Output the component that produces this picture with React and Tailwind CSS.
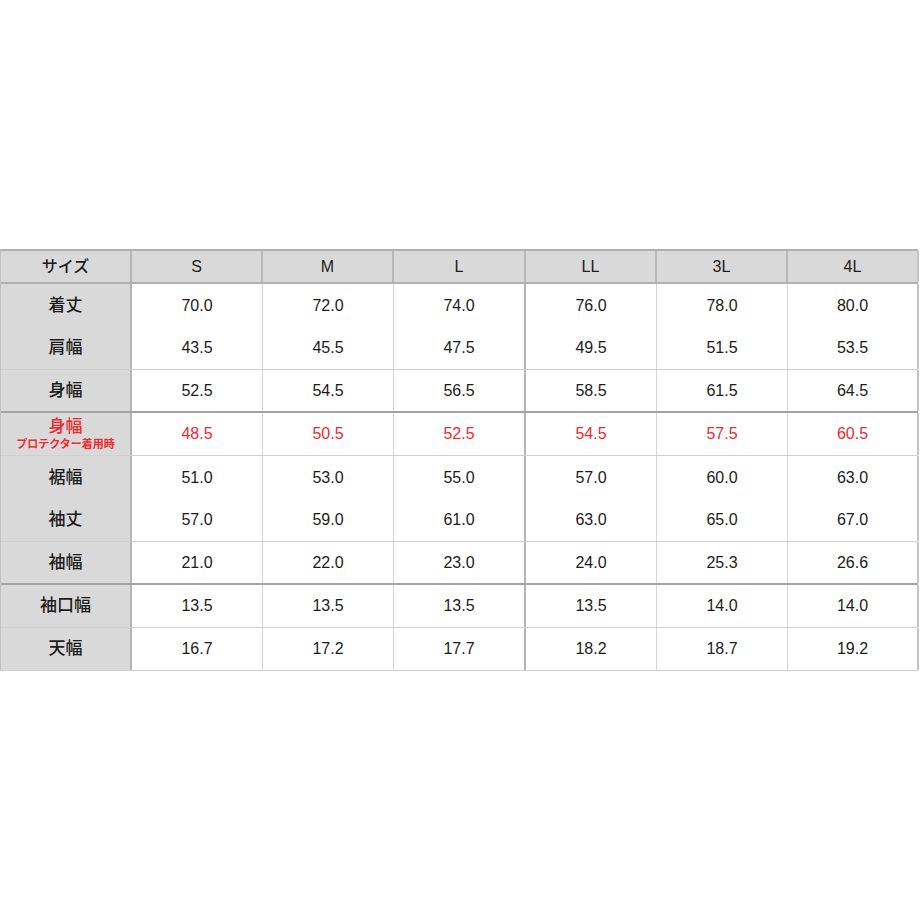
import React from "react";

const sizes = ["S", "M", "L", "LL", "3L", "4L"];

const rows = [
  { label: "着丈", v: ["70.0", "72.0", "74.0", "76.0", "78.0", "80.0"], b: "none" },
  { label: "肩幅", v: ["43.5", "45.5", "47.5", "49.5", "51.5", "53.5"], b: "light" },
  { label: "身幅", v: ["52.5", "54.5", "56.5", "58.5", "61.5", "64.5"], b: "dark" },
  { label: "身幅", sub: "プロテクター着用時", red: true, v: ["48.5", "50.5", "52.5", "54.5", "57.5", "60.5"], b: "light" },
  { label: "裾幅", v: ["51.0", "53.0", "55.0", "57.0", "60.0", "63.0"], b: "none" },
  { label: "袖丈", v: ["57.0", "59.0", "61.0", "63.0", "65.0", "67.0"], b: "light" },
  { label: "袖幅", v: ["21.0", "22.0", "23.0", "24.0", "25.3", "26.6"], b: "dark" },
  { label: "袖口幅", v: ["13.5", "13.5", "13.5", "13.5", "14.0", "14.0"], b: "light" },
  { label: "天幅", v: ["16.7", "17.2", "17.7", "18.2", "18.7", "19.2"], b: "light" },
];

const font = "font-['Liberation_Sans','Noto_Sans_CJK_JP',sans-serif]";

function borderB(b) {
  if (b === "dark") return "border-b-2 border-b-[#a3a3a3]";
  if (b === "light") return "border-b border-b-[#d0d0d0]";
  return "";
}

function colBorder(i) {
  if (i === 0) return "border-r-2 border-r-[#b4b4b4]";
  if (i === 3) return "border-r-2 border-r-[#b4b4b4]";
  if (i === 6) return "border-r-2 border-r-[#c4c4c4]";
  return "border-r border-r-[#d4d4d4]";
}

export default function App() {
  return (
    <div className={`w-[920px] h-[920px] bg-white pt-[249px] ${font} text-[#1c1c1c]`}>
      <div className="w-[918px] border-l border-l-[#c0c0c0] border-t-2 border-t-[#b0b0b0]">
        <div className="grid grid-cols-[131px_131px_131px_132px_131px_131px_131px] h-[33px] bg-[#d9d9d9] border-b-2 border-b-[#b0b0b0]">
          <div className={`flex items-center justify-center text-[16px] font-medium ${colBorder(0)}`}>サイズ</div>
          {sizes.map((s, i) => (
            <div key={s} className={`flex items-center justify-center text-[16px] ${i === 5 ? "border-r-2 border-r-[#c4c4c4]" : "border-r-2 border-r-[#b8b8b8]"}`}>
              {s}
            </div>
          ))}
        </div>
        {rows.map((r, ri) => (
          <div key={ri} className={`grid grid-cols-[131px_131px_131px_132px_131px_131px_131px] h-[43px] ${borderB(r.b)}`}>
            <div className={`bg-[#d9d9d9] flex flex-col items-center justify-center ${colBorder(0)}`}>
              {r.sub ? (
                <>
                  <span className="text-[17px] font-medium leading-[20px] text-[#ee2a2f]">{r.label}</span>
                  <span className="text-[11px] font-bold leading-[13px] text-[#ee2a2f] mt-[1px]">{r.sub}</span>
                </>
              ) : (
                <span className="text-[17px] font-medium">{r.label}</span>
              )}
            </div>
            {r.v.map((v, i) => (
              <div
                key={i}
                className={`flex items-center justify-center text-[16px] ${colBorder(i + 1)} ${r.red ? "text-[#ee2a2f]" : ""}`}
              >
                {v}
              </div>
            ))}
          </div>
        ))}
      </div>
    </div>
  );
}
